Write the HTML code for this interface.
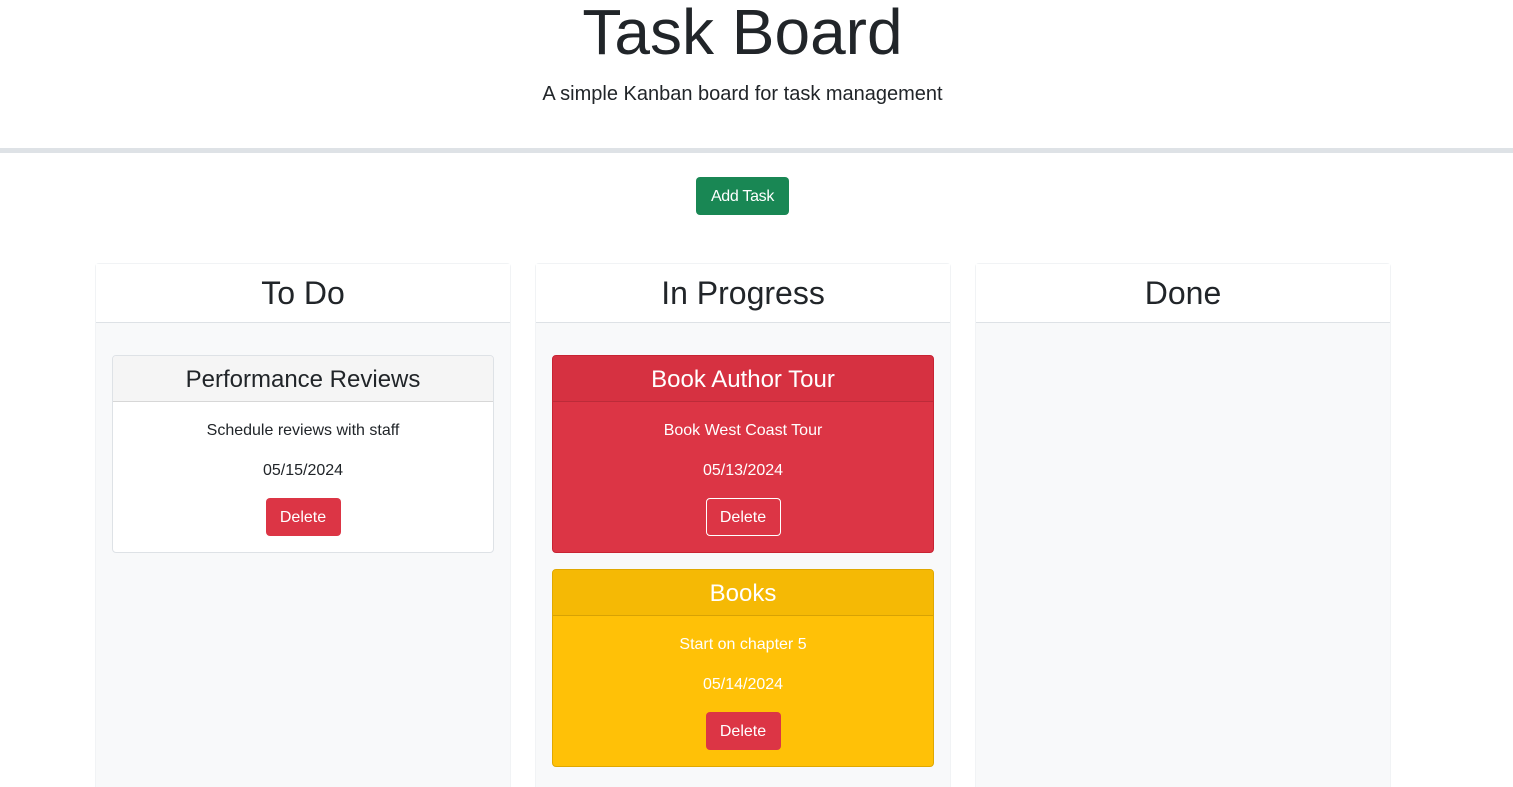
<!DOCTYPE html>
<html><head><meta charset="utf-8"><style>
*{box-sizing:border-box;margin:0;padding:0}
html,body{width:1513px;height:787px;overflow:hidden}
body{position:relative;background:#fff;font-family:"Liberation Sans",sans-serif;color:#212529}
h1{position:absolute;left:0;width:1485px;top:-6px;text-align:center;font-size:64px;font-weight:400;line-height:76px}
.sub{position:absolute;left:0;width:1485px;top:81px;text-align:center;font-size:20px;line-height:26px}
.hr{position:absolute;left:0;top:148px;width:1513px;height:5px;background:#dee2e6}
.add{position:absolute;left:696px;top:177px;width:93px;height:38px;background:#198754;color:#fff;border-radius:4px;font-size:16px;line-height:39px;text-align:center;letter-spacing:-0.3px}
.col{position:absolute;top:263px;width:416px;height:524px;background:#f8f9fa;border:1px solid #f1f3f5;border-bottom:none;border-radius:4px 4px 0 0}
.col .h{height:59px;background:#fff;border-bottom:1px solid #dee2e6;text-align:center;font-size:32px;line-height:58px}
.card{position:absolute;left:16px;width:382px;height:198px;border:1px solid #dee2e6;border-radius:4px;background:#fff;text-align:center;overflow:hidden}
.card .ch{height:46px;border-bottom:1px solid rgba(0,0,0,.12);background:#f5f5f5;font-size:24px;line-height:47px}
.card .t{font-size:16px;margin-top:19px;line-height:20px}
.card .d{font-size:16px;margin-top:20px;line-height:20px}
.btn{display:inline-block;margin-top:17px;width:75px;height:38px;border-radius:4px;background:#dc3545;color:#fff;font-size:16px;line-height:39px}
.red{background:#dc3545;border-color:#c82333;color:#fff}
.red .ch{background:#d63141;color:#fff}
.red .btn{border:1px solid #fff;line-height:37px}
.yel{background:#ffc107;border-color:#e0a800;color:#fff}
.yel .ch{background:#f5b905;color:#fff}
</style></head><body>
<h1>Task Board</h1>
<div class="sub">A simple Kanban board for task management</div>
<div class="hr"></div>
<div class="add">Add Task</div>
<div class="col" style="left:95px"><div class="h">To Do</div>
<div class="card" style="top:91px"><div class="ch">Performance Reviews</div><div class="t">Schedule reviews with staff</div><div class="d">05/15/2024</div><div class="btn">Delete</div></div>
</div>
<div class="col" style="left:535px"><div class="h">In Progress</div>
<div class="card red" style="top:91px"><div class="ch">Book Author Tour</div><div class="t">Book West Coast Tour</div><div class="d">05/13/2024</div><div class="btn">Delete</div></div>
<div class="card yel" style="top:305px"><div class="ch">Books</div><div class="t">Start on chapter 5</div><div class="d">05/14/2024</div><div class="btn">Delete</div></div>
</div>
<div class="col" style="left:975px"><div class="h">Done</div></div>
</body></html>
